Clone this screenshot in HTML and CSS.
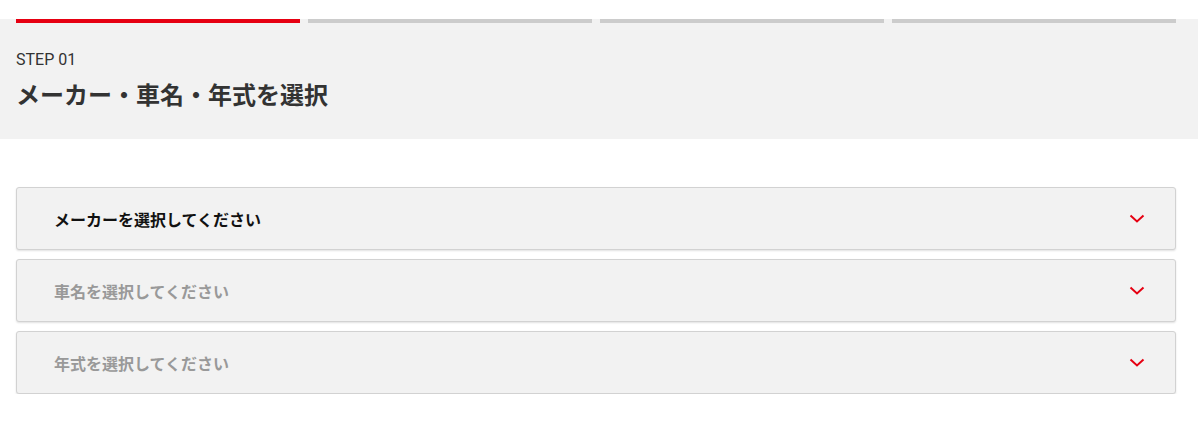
FILE: index.html
```html
<!DOCTYPE html>
<html lang="ja">
<head>
<meta charset="utf-8">
<title>STEP 01</title>
<link rel="stylesheet" href="styles.css">
</head>
<body>
<header class="step-header">
  <div class="progress">
    <span class="bar active"></span>
    <span class="bar"></span>
    <span class="bar"></span>
    <span class="bar"></span>
  </div>
  <p class="step-label">STEP 01</p>
  <h1 class="step-title">メーカー・車名・年式を選択</h1>
</header>
<main class="selects">
  <div class="select">
    <span class="select-text">メーカーを選択してください</span>
    <svg class="chevron" width="16" height="9" viewBox="0 0 16 9"><path d="M1.5 1.5 L8 7.5 L14.5 1.5" fill="none" stroke="#e60012" stroke-width="2"/></svg>
  </div>
  <div class="select disabled">
    <span class="select-text">車名を選択してください</span>
    <svg class="chevron" width="16" height="9" viewBox="0 0 16 9"><path d="M1.5 1.5 L8 7.5 L14.5 1.5" fill="none" stroke="#e60012" stroke-width="2"/></svg>
  </div>
  <div class="select disabled">
    <span class="select-text">年式を選択してください</span>
    <svg class="chevron" width="16" height="9" viewBox="0 0 16 9"><path d="M1.5 1.5 L8 7.5 L14.5 1.5" fill="none" stroke="#e60012" stroke-width="2"/></svg>
  </div>
</main>
</body>
</html>
```
FILE: styles.css
```css
* { box-sizing: border-box; }
html, body { margin: 0; padding: 0; background: #fff; }
body {
  font-family: "Noto Sans CJK JP", "Noto Sans", sans-serif;
  color: #333;
}
.step-header {
  margin-top: 19px;
  background: #f2f2f2;
  padding: 0 22px 29px 16px;
}
.progress {
  display: flex;
  gap: 8px;
}
.bar {
  flex: 1;
  height: 4px;
  background: #cccccc;
}
.bar.active { background: #e60012; }
.step-label {
  margin: 27px 0 0;
  font-family: Roboto, "Noto Sans CJK JP", sans-serif;
  font-size: 16px;
  line-height: 20px;
  color: #333;
}
.step-title {
  margin: 8px 0 0;
  font-size: 24px;
  line-height: 32px;
  font-weight: 700;
  color: #333;
}
.selects {
  padding: 48px 22px 0 16px;
  display: flex;
  flex-direction: column;
  gap: 9px;
}
.select {
  height: 63px;
  display: flex;
  align-items: center;
  justify-content: space-between;
  padding: 0 30px 0 37px;
  background: #f2f2f2;
  border: 1px solid #d2d2d2;
  border-radius: 3px;
  box-shadow: 0 1px 2px rgba(0, 0, 0, 0.12);
}
.select-text {
  font-size: 16px;
  font-weight: 700;
  color: #111;
}
.select.disabled .select-text { color: #999; }
.chevron { display: block; }
```
